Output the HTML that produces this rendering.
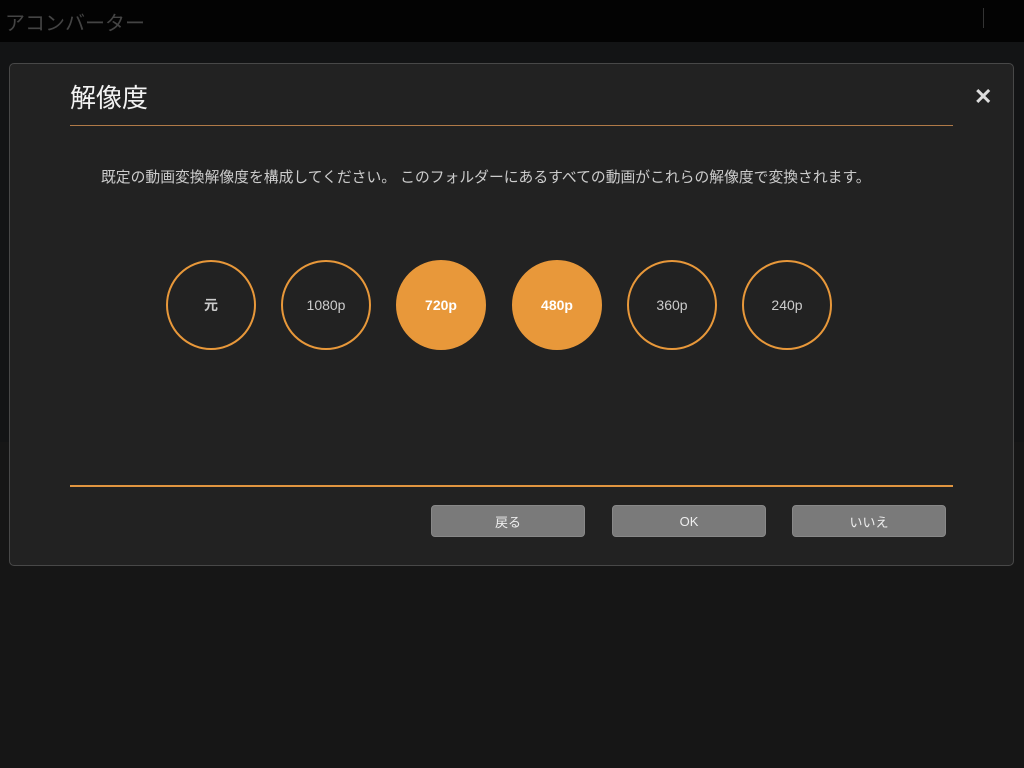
<!DOCTYPE html>
<html><head><meta charset="utf-8"><style>
*{margin:0;padding:0;box-sizing:border-box}
body{width:1024px;height:768px;background:#161616;position:relative;overflow:hidden;font-family:"Liberation Sans","Noto Sans CJK JP",sans-serif}
.top{position:absolute;left:0;top:0;width:1024px;height:42px;background:#030303}
.top span{position:absolute;left:5px;top:7px;font-size:20px;color:#444}
.top i{position:absolute;left:983px;top:8px;width:1px;height:20px;background:#333}
.bg2{position:absolute;left:0;top:42px;width:1024px;height:400px;background:#131415}
.dlg{position:absolute;left:9px;top:63px;width:1005px;height:503px;background:#222;border:1px solid #484848;border-radius:5px}
.title{position:absolute;left:60px;top:14px;font-size:26px;color:#f2f2f2}
.l1{position:absolute;left:60px;top:61px;width:883px;height:1px;background:#b07a48}
.l2{position:absolute;left:60px;top:421px;width:883px;height:2px;background:#e09540}
.x{position:absolute;left:964px;top:20px;font-size:22px;color:#ddd;font-weight:bold}
.desc{position:absolute;left:91px;top:102px;font-size:14.8px;color:#ccc;white-space:nowrap}
.c{position:absolute;top:196px;width:90px;height:90px;border-radius:50%;border:2px solid #e8983a;color:#ccc;font-size:14px;display:flex;align-items:center;justify-content:center}
.c.on{background:#e8983a;color:#fff;font-weight:bold}
.b{position:absolute;top:441px;width:154px;height:32px;background:#7a7a7a;border:1px solid #888;border-radius:4px;color:#eee;font-size:13px;display:flex;align-items:center;justify-content:center}
</style></head><body>
<div class="top"><span>アコンバーター</span><i></i></div>
<div class="bg2"></div>
<div class="dlg">
<div class="title">解像度</div>
<div class="x">✕</div>
<div class="l1"></div>
<div class="desc">既定の動画変換解像度を構成してください。 このフォルダーにあるすべての動画がこれらの解像度で変換されます。</div>
<div class="c" style="left:156px;font-weight:bold">元</div>
<div class="c" style="left:271px">1080p</div>
<div class="c on" style="left:386px">720p</div>
<div class="c on" style="left:502px">480p</div>
<div class="c" style="left:617px">360p</div>
<div class="c" style="left:732px">240p</div>
<div class="l2"></div>
<div class="b" style="left:421px">戻る</div>
<div class="b" style="left:602px">OK</div>
<div class="b" style="left:782px">いいえ</div>
</div>
</body></html>
